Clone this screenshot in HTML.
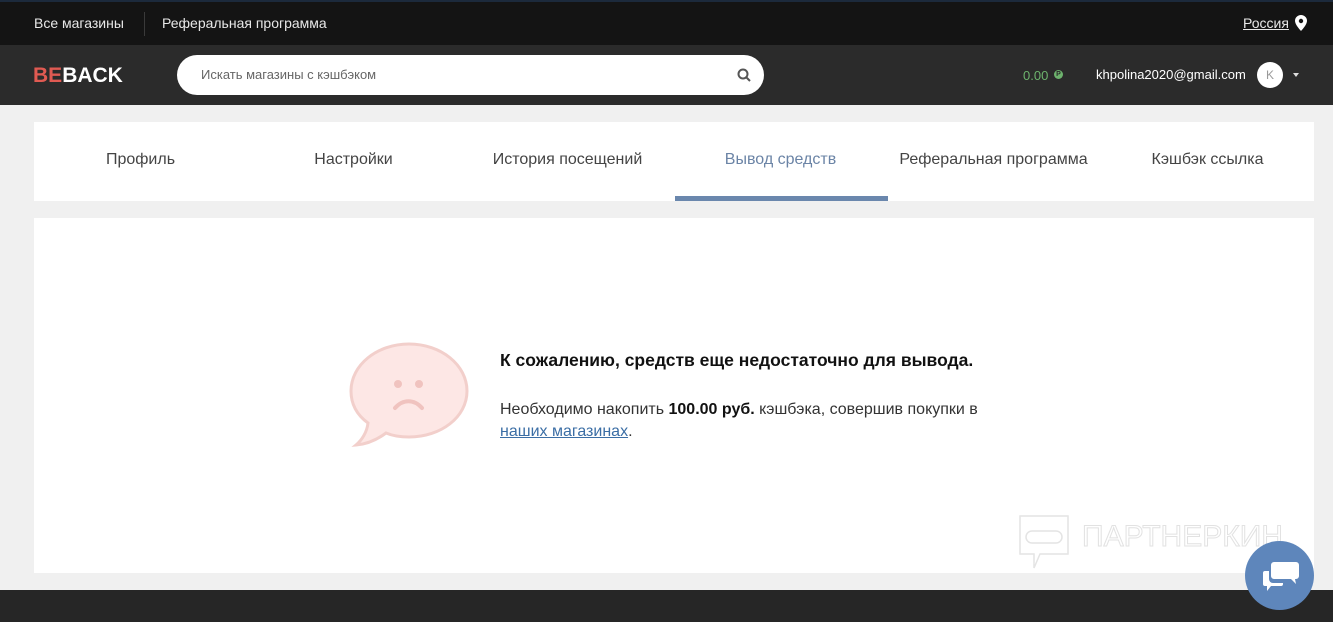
<!DOCTYPE html>
<html><head><meta charset="utf-8"><style>
*{margin:0;padding:0;box-sizing:border-box}
body{width:1333px;height:622px;overflow:hidden;background:#f0f0f0;font-family:"Liberation Sans","Noto Sans CJK SC",sans-serif;position:relative}
.top{position:absolute;left:0;top:0;width:1333px;height:45px;background:#141414;border-top:2px solid #1c2a3c;color:#e8e8e8;font-size:14px}
.top span{position:absolute;top:13px}
.hdr{position:absolute;left:0;top:45px;width:1333px;height:60px;background:#2b2b2b}
.logo{position:absolute;left:33px;top:19px;font-size:21px;font-weight:bold;color:#fff;letter-spacing:0}
.logo b{color:#e05a52}
.search{position:absolute;left:177px;top:10px;width:587px;height:40px;background:#fff;border-radius:20px;font-size:13px;color:#666;padding:12px 0 0 24px}
.tabs{position:absolute;left:34px;top:122px;width:1280px;height:79px;background:#fff}
.tab{position:absolute;top:29px;font-size:16px;color:#444;width:213px;text-align:center}
.card{position:absolute;left:34px;top:218px;width:1280px;height:355px;background:#fff}
.foot{position:absolute;left:0;top:590px;width:1333px;height:32px;background:#262626}
</style></head><body>
<div class="top">
<span style="left:34px">Все магазины</span>
<div style="position:absolute;left:144px;top:10px;width:1px;height:24px;background:#3a3a3a"></div>
<span style="left:162px">Реферальная программа</span>
<span style="left:1243px;text-decoration:underline">Россия</span>
<svg style="position:absolute;left:1295px;top:13px" width="12" height="16" viewBox="0 0 12 16"><path d="M6 0C2.7 0 0 2.6 0 5.8 0 10 6 16 6 16s6-6 6-10.2C12 2.6 9.3 0 6 0z" fill="#fff"/><circle cx="6" cy="6" r="2.2" fill="#141414"/></svg>
</div>
<div class="hdr">
<div class="logo"><b>BE</b>BACK</div>
<div class="search">Искать магазины с кэшбэком
<svg style="position:absolute;right:13px;top:13px" width="14" height="14" viewBox="0 0 14 14"><circle cx="6" cy="6" r="4.5" stroke="#555" stroke-width="2" fill="none"/><path d="M9.5 9.5L13 13" stroke="#555" stroke-width="2"/></svg></div>
<span style="position:absolute;left:1023px;top:23px;font-size:13px;color:#6db36d">0.00</span>
<div style="position:absolute;left:1054px;top:25px;width:9px;height:9px;border-radius:50%;background:#6db36d;font-size:7px;color:#2b2b2b;text-align:center;line-height:9px;font-weight:bold">P</div>
<span style="position:absolute;left:1096px;top:22px;font-size:13px;color:#fff">khpolina2020@gmail.com</span>
<div style="position:absolute;left:1257px;top:17px;width:26px;height:26px;border-radius:50%;background:#fff;color:#999;font-size:12px;text-align:center;line-height:26px">K</div>
<div style="position:absolute;left:1293px;top:28px;border:3px solid transparent;border-top:4px solid #ddd"></div>
</div>
<div class="tabs">
<div class="tab" style="left:0">Профиль</div>
<div class="tab" style="left:213px">Настройки</div>
<div class="tab" style="left:427px">История посещений</div>
<div class="tab" style="left:640px;color:#6b84a6">Вывод средств</div>
<div style="position:absolute;left:641px;top:74px;width:213px;height:5px;background:#6a87ad"></div>
<div class="tab" style="left:853px">Реферальная программа</div>
<div class="tab" style="left:1067px">Кэшбэк ссылка</div>
</div>
<div class="card">
<svg style="position:absolute;left:314px;top:124px" width="122" height="106" viewBox="0 0 122 106"><path d="M61 2C29 2 3 23 3 49c0 13 6 24 17 32-1 9-6 17-12 22 12-1 22-6 30-12 7 3 15 4 23 4 32 0 58-20 58-46S93 2 61 2z" fill="#fde7e5" stroke="#f2cfcb" stroke-width="3"/><circle cx="50" cy="42" r="4" fill="#f0c3bf"/><circle cx="71" cy="42" r="4" fill="#f0c3bf"/><path d="M47 66c8-9 19-9 27 0" stroke="#f0c3bf" stroke-width="4" fill="none" stroke-linecap="round"/></svg>
<div style="position:absolute;left:466px;top:132px;font-size:17.5px;font-weight:bold;color:#111">К сожалению, средств еще недостаточно для вывода.</div>
<div style="position:absolute;left:466px;top:181px;font-size:16px;color:#333;line-height:22px">Необходимо накопить <b style="color:#111">100.00 руб.</b> кэшбэка, совершив покупки в<br><span style="color:#3b6ea5;text-decoration:underline">наших магазинах</span>.</div>
<svg style="position:absolute;left:984px;top:296px" width="52" height="56" viewBox="0 0 52 56"><path d="M2 2h48v38H22l-6 14V40H2z" fill="none" stroke="#e4e4e4" stroke-width="1.5"/><rect x="8" y="17" width="36" height="12" rx="6" fill="none" stroke="#e4e4e4" stroke-width="1.5"/></svg>
<div style="position:absolute;left:1048px;top:302px;font-size:30px;color:#fff;-webkit-text-stroke:1px #e2e2e2;letter-spacing:0">ПАРТНЕРКИН</div>
</div>
<div class="foot"></div>
<div style="position:absolute;left:1245px;top:541px;width:69px;height:69px;border-radius:50%;background:#5e86bb">
<svg style="position:absolute;left:17px;top:19px" width="38" height="32" viewBox="0 0 38 32"><path d="M12 2h22a3 3 0 0 1 3 3v11a3 3 0 0 1-3 3h-1l1 5-5-5H12a3 3 0 0 1-3-3V5a3 3 0 0 1 3-3z" fill="#fff"/><path d="M3 11h4v8a4 4 0 0 0 4 4h10v1a2 2 0 0 1-2 2H9l-4 5v-5H3a2 2 0 0 1-2-2V13a2 2 0 0 1 2-2z" fill="#fff"/></svg>
</div>
</body></html>
